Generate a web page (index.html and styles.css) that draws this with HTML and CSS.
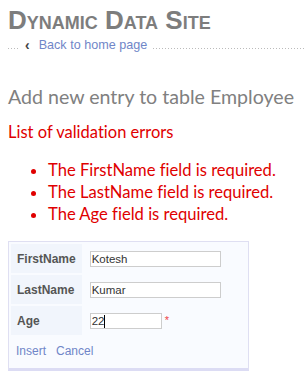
FILE: index.html
```html
<!DOCTYPE html>
<html>
<head>
<meta charset="utf-8">
<link rel="stylesheet" href="styles.css">
</head>
<body>
<div class="page">
  <h1 class="site-title">Dynamic Data Site</h1>
  <div class="back-row">
    <span class="dots dots-lead"></span>
    <span class="chev">&lsaquo;</span>
    <a class="back-link" href="#">Back to home page</a>
    <span class="dots dots-fill"></span>
  </div>
  <h2 class="sub-header">Add new entry to table Employee</h2>
  <div class="val-title">List of validation errors</div>
  <ul class="val-list">
    <li>The FirstName field is required.</li>
    <li>The LastName field is required.</li>
    <li>The Age field is required.</li>
  </ul>
  <table class="details">
    <tr>
      <th>FirstName</th>
      <td><input class="field" type="text" value="Kotesh"></td>
    </tr>
    <tr>
      <th>LastName</th>
      <td><input class="field" type="text" value="Kumar"></td>
    </tr>
    <tr>
      <th>Age</th>
      <td><span class="age-wrap"><input class="field field-short" type="text" value="22"><span class="caret"></span></span><span class="req">*</span></td>
    </tr>
    <tr>
      <td colspan="2" class="actions"><a href="#">Insert</a><a href="#">Cancel</a></td>
    </tr>
  </table>
</div>
</body>
</html>
```

FILE: styles.css
```css
html, body {
  margin: 0;
  padding: 0;
  background: #fff;
}
.page {
  padding: 0 0 0 8px;
  font-family: "Lato", sans-serif;
  font-variant-ligatures: none;
}
.site-title {
  margin: 0;
  padding-top: 5px;
  font-family: "Liberation Sans", sans-serif;
  font-variant: small-caps;
  font-weight: bold;
  font-size: 26px;
  line-height: 30px;
  color: #7d7d7d;
}
.back-row {
  display: flex;
  align-items: flex-end;
  height: 18px;
}
.dots {
  height: 1px;
  margin-bottom: 4px;
  background-image: linear-gradient(to right, #bbb 1px, transparent 1px);
  background-size: 3px 1px;
  background-repeat: repeat-x;
}
.dots-lead {
  width: 12px;
}
.dots-fill {
  flex: 1;
  margin-left: 6px;
}
.chev {
  font-family: "Liberation Sans", sans-serif;
  font-size: 14px;
  font-weight: bold;
  color: #444;
  margin: 0 9px 0 5px;
  line-height: 16px;
}
.back-link {
  font-family: "Liberation Sans", sans-serif;
  font-size: 12.6px;
  color: #7086c8;
  text-decoration: none;
  line-height: 16px;
}
.sub-header {
  margin: 0;
  padding-top: 33px;
  font-weight: normal;
  font-size: 19.6px;
  line-height: 22px;
  color: #808080;
  white-space: nowrap;
}
.val-title {
  margin-top: 15px;
  font-size: 16.5px;
  line-height: 18px;
  color: #e00000;
}
.val-list {
  margin: 18px 0 0 0;
  padding-left: 40px;
  font-size: 16.6px;
  line-height: 22px;
  color: #e00000;
}
.details {
  box-sizing: border-box;
  margin-top: 16px;
  border: 1px solid #dfdff2;
  border-bottom: 3px solid #dcdcf4;
  background: #f9fbff;
  border-spacing: 2px;
  width: 241px;
  font-family: "Liberation Sans", sans-serif;
}
.details th {
  background: #f1f5fc;
  text-align: left;
  width: 57px;
  height: 29px;
  padding: 0 6px;
  font-size: 12px;
  color: #555;
  font-weight: bold;
}
.details td {
  padding: 0 0 0 6px;
}
.field {
  box-sizing: border-box;
  display: block;
  width: 131px;
  height: 16px;
  border: 1px solid #cdcdcd;
  background: #fff;
  padding: 0 1px;
  font-family: "Liberation Sans", sans-serif;
  font-size: 11.5px;
  color: #333;
  outline: none;
}
.field-short {
  width: 72px;
}
.age-wrap {
  position: relative;
  display: inline-block;
  vertical-align: middle;
}
.caret {
  position: absolute;
  left: 14px;
  top: 2px;
  width: 1px;
  height: 13px;
  background: #000;
}
.req {
  color: #e44;
  font-size: 11px;
  margin-left: 3px;
  vertical-align: 2px;
}
.details td.actions {
  padding: 0 0 3px 5px;
  height: 26px;
}
.actions a {
  font-size: 12px;
  color: #7086c8;
  text-decoration: none;
  margin-right: 10px;
}
```
